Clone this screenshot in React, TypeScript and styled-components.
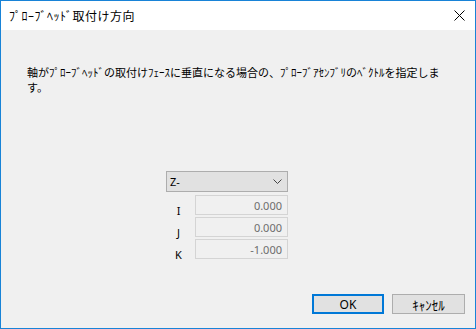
import styled, { createGlobalStyle } from "styled-components";

const GlobalStyle = createGlobalStyle`
  html, body {
    margin: 0;
    padding: 0;
    background: #f0f0f0;
    overflow: hidden;
  }
`;

const jpFont = `"Noto Sans CJK JP", "Noto Sans", sans-serif`;
const uiFont = `"Noto Sans", "Noto Sans CJK JP", sans-serif`;

const Window = styled.div`
  width: 476px;
  height: 329px;
  box-sizing: border-box;
  border: 1px solid #1883d7;
  background: #f0f0f0;
  display: flex;
  flex-direction: column;
  font-family: ${jpFont};
  color: #000;
`;

const TitleBar = styled.div`
  height: 29px;
  background: #fff;
  display: flex;
  align-items: center;
  justify-content: space-between;
  padding: 0 9px 0 8px;
  flex-shrink: 0;
`;

const Title = styled.span`
  font-size: 12px;
  letter-spacing: 0.5px;
`;

const CloseIcon = styled.svg`
  width: 11px;
  height: 11px;
  margin-right: 1px;
`;

const Body = styled.div`
  flex: 1;
  display: flex;
  flex-direction: column;
  padding: 35px 0 0 26px;
`;

const Message = styled.p`
  margin: 0;
  font-size: 11px;
  line-height: 15px;
`;

const Form = styled.div`
  margin: 76px 0 0 139px;
  display: grid;
  grid-template-columns: 25px 93px;
  column-gap: 4px;
  row-gap: 2px;
  width: 122px;
`;

const Select = styled.div`
  grid-column: 1 / -1;
  height: 21px;
  margin-bottom: 1px;
  box-sizing: border-box;
  border: 1px solid #adadad;
  background: #e1e1e1;
  display: flex;
  align-items: center;
  justify-content: space-between;
  padding: 0 5px 0 3px;
  font-family: ${uiFont};
  font-size: 11px;
`;

const Chevron = styled.svg`
  width: 9px;
  height: 5px;
`;

const AxisLabel = styled.span`
  justify-self: center;
  align-self: end;
  font-family: ${uiFont};
  font-size: 11px;
  line-height: 14px;
  margin-bottom: -3px;
`;

const ValueBox = styled.div`
  height: 20px;
  box-sizing: border-box;
  border: 1px solid #d4d4d4;
  background: #f0f0f0;
  display: flex;
  align-items: center;
  justify-content: flex-end;
  padding-right: 5px;
  font-family: ${uiFont};
  font-size: 11px;
  color: #6d6d6d;
`;

const Footer = styled.div`
  margin-top: auto;
  display: flex;
  justify-content: flex-end;
  gap: 8px;
  padding: 0 10px 14px 0;
`;

const Button = styled.button<{ $primary?: boolean; $width: number }>`
  width: ${(p) => p.$width}px;
  height: 20px;
  box-sizing: border-box;
  margin: 0;
  padding: 0;
  background: #e1e1e1;
  border: ${(p) => (p.$primary ? "2px solid #0078d7" : "1px solid #adadad")};
  font-family: ${uiFont};
  font-size: 12px;
  color: #000;
  display: flex;
  align-items: center;
  justify-content: center;
`;

const JpCaption = styled.span`
  font-family: ${jpFont};
  font-size: 13px;
`;

const vector = [
  { axis: "I", value: "0.000" },
  { axis: "J", value: "0.000" },
  { axis: "K", value: "-1.000" },
];

export default function App() {
  return (
    <>
      <GlobalStyle />
      <Window>
        <TitleBar>
          <Title>ﾌﾟﾛｰﾌﾞﾍｯﾄﾞ取付け方向</Title>
          <CloseIcon viewBox="0 0 11 11">
            <path d="M0.5 0.5 L10.5 10.5 M10.5 0.5 L0.5 10.5" stroke="#000" strokeWidth="1" />
          </CloseIcon>
        </TitleBar>
        <Body>
          <Message>
            軸がﾌﾟﾛｰﾌﾞﾍｯﾄﾞの取付けﾌｪｰｽに垂直になる場合の、ﾌﾟﾛｰﾌﾞｱｾﾝﾌﾞﾘのﾍﾞｸﾄﾙを指定しま
            <br />
            す。
          </Message>
          <Form>
            <Select>
              <span>Z-</span>
              <Chevron viewBox="0 0 9 5">
                <path d="M0.5 0.5 L4.5 4.5 L8.5 0.5" fill="none" stroke="#444" strokeWidth="1" />
              </Chevron>
            </Select>
            {vector.map((v) => [
              <AxisLabel key={v.axis + "l"}>{v.axis}</AxisLabel>,
              <ValueBox key={v.axis + "v"}>{v.value}</ValueBox>,
            ])}
          </Form>
          <Footer>
            <Button $primary $width={72}>OK</Button>
            <Button $width={73}>
              <JpCaption>ｷｬﾝｾﾙ</JpCaption>
            </Button>
          </Footer>
        </Body>
      </Window>
    </>
  );
}
